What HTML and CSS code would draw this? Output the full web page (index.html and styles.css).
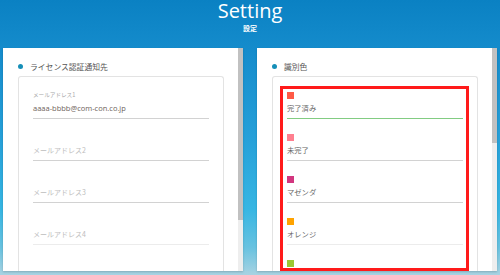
FILE: index.html
```html
<!DOCTYPE html>
<html lang="ja">
<head>
<meta charset="utf-8">
<title>Setting</title>
<link rel="stylesheet" href="styles.css">
</head>
<body>
  <header class="header">
    <div class="title">Setting</div>
    <div class="subtitle">設定</div>
  </header>
  <main class="cards">
    <section class="card">
      <div class="card-body">
        <div class="card-title"><span class="dot"></span>ライセンス認証通知先</div>
        <div class="panel">
          <div class="field">
            <div class="field-label">メールアドレス1</div>
            <div class="field-input">aaaa-bbbb@com-con.co.jp</div>
          </div>
          <div class="field">
            <div class="field-label"></div>
            <div class="field-input placeholder">メールアドレス2</div>
          </div>
          <div class="field">
            <div class="field-label"></div>
            <div class="field-input placeholder">メールアドレス3</div>
          </div>
          <div class="field faint">
            <div class="field-label"></div>
            <div class="field-input placeholder">メールアドレス4</div>
          </div>
        </div>
      </div>
      <div class="scrollbar"><div class="thumb thumb-long"></div></div>
    </section>
    <section class="card">
      <div class="card-body">
        <div class="card-title"><span class="dot"></span>識別色</div>
        <div class="panel">
          <div class="color-item active">
            <span class="swatch swatch-done"></span>
            <div class="color-name">完了済み</div>
          </div>
          <div class="color-item">
            <span class="swatch swatch-pending"></span>
            <div class="color-name">未完了</div>
          </div>
          <div class="color-item">
            <span class="swatch swatch-magenta"></span>
            <div class="color-name">マゼンダ</div>
          </div>
          <div class="color-item faint">
            <span class="swatch swatch-orange"></span>
            <div class="color-name">オレンジ</div>
          </div>
          <div class="color-item">
            <span class="swatch swatch-green"></span>
          </div>
        </div>
        <div class="highlight"></div>
      </div>
      <div class="scrollbar"><div class="thumb thumb-short"></div></div>
    </section>
  </main>
</body>
</html>
```
FILE: styles.css
```css
html, body {
  margin: 0;
  padding: 0;
}

body {
  width: 500px;
  height: 275px;
  overflow: hidden;
  font-family: "Open Sans", "Noto Sans CJK JP", sans-serif;
  background: linear-gradient(180deg, #0a81c3 0%, #168dcd 20%, #26a0d9 50%, #36b6e3 76%, #68c2e0 90%, #a8d3e2 100%);
}

.header {
  height: 48px;
  text-align: center;
  color: #ffffff;
}

.title {
  font-size: 20px;
  line-height: 22px;
}

.subtitle {
  font-family: "Noto Sans CJK JP", sans-serif;
  font-size: 7px;
  font-weight: bold;
  line-height: 8px;
  margin-top: 2px;
}

.cards {
  display: flex;
  gap: 14px;
  padding: 0 3px;
  height: 223px;
}

.card {
  flex: 0 0 240px;
  display: flex;
  background: #ffffff;
  box-shadow: 0 1px 2px rgba(0, 0, 0, 0.18);
}

.card-body {
  flex: 1;
  position: relative;
  overflow: hidden;
  padding: 13px 0 0 15px;
}

.card-title {
  display: flex;
  align-items: center;
  height: 10px;
  font-family: "Noto Sans CJK JP", sans-serif;
  font-size: 7.8px;
  color: #555555;
}

.dot {
  width: 5px;
  height: 5px;
  border-radius: 50%;
  background: #168fb8;
  margin-right: 7px;
}

.panel {
  margin-top: 5px;
  width: 206px;
  height: 260px;
  box-sizing: border-box;
  border: 1px solid #e3e3e3;
  border-bottom: 0;
  border-radius: 3px 3px 0 0;
  padding: 0 14px;
}

.field {
  padding: 13px 0 2px;
  border-bottom: 1px solid #d2d2d2;
}

.field-label {
  height: 10px;
  line-height: 10px;
  font-family: "Noto Sans CJK JP", sans-serif;
  font-size: 5.6px;
  color: #a8a8a8;
}

.field-input {
  height: 16px;
  line-height: 16px;
  font-size: 7.5px;
  color: #6e625a;
  white-space: nowrap;
}

.placeholder {
  font-family: "Noto Sans CJK JP", sans-serif;
  font-size: 7px;
  color: #bdbdbd;
}

.faint {
  border-bottom-color: #ececec;
}

.color-item {
  padding: 15px 0 2px;
  border-bottom: 1px solid #d2d2d2;
}

.color-item.active {
  border-bottom-color: #82cc82;
}

.color-item.faint {
  border-bottom-color: #ececec;
}

.swatch {
  display: block;
  width: 7px;
  height: 7px;
}

.swatch-done { background: #ff5a46; }
.swatch-pending { background: #ff7f8f; }
.swatch-magenta { background: #d2367f; }
.swatch-orange { background: #ffa300; }
.swatch-green { background: #9bc732; }

.color-name {
  margin-top: 1px;
  height: 16px;
  line-height: 16px;
  font-family: "Noto Sans CJK JP", sans-serif;
  font-size: 7.3px;
  color: #666666;
}

.highlight {
  position: absolute;
  left: 23px;
  top: 38px;
  width: 189px;
  height: 185px;
  box-sizing: border-box;
  border: 3px solid #ff1a1a;
}

.scrollbar {
  flex: 0 0 5px;
  background: #eeeeee;
}

.thumb {
  background: #c1c1c1;
}

.thumb-long {
  height: 172px;
}

.thumb-short {
  height: 95px;
}
```
